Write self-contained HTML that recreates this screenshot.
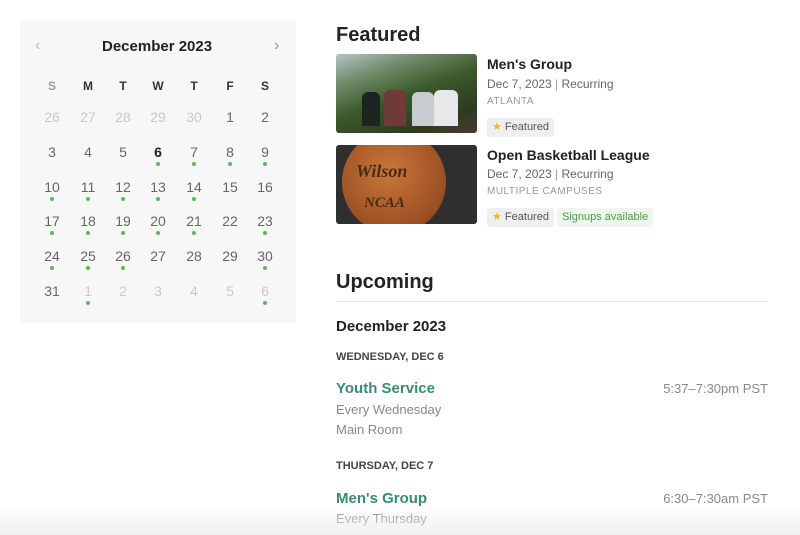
<!DOCTYPE html>
<html><head><style>
*{margin:0;padding:0;box-sizing:border-box}
body{width:800px;height:535px;overflow:hidden;background:#fff;font-family:"Liberation Sans",sans-serif;color:#222;position:relative}
.a{position:absolute;white-space:nowrap}
.cal{position:absolute;left:20px;top:20px;width:276px;height:303px;background:#f7f7f7}
.c{position:absolute;width:30px;margin-left:-15px;text-align:center;font-size:14px;color:#666}
.h{font-size:12px;font-weight:bold;color:#333}
.g{color:#c8c8c8}
.d{position:absolute;width:4px;height:4px;border-radius:2px;background:#5cb85c;margin-left:-2px}
.img{position:absolute;left:336px;width:141px;height:79px;border-radius:3px;overflow:hidden}
.t{font-size:14px;font-weight:bold;color:#222}
.s{font-size:12px;color:#666}
.cap{font-size:10px;color:#999;letter-spacing:.5px}
.b{position:absolute;height:19px;border-radius:3px;font-size:11px;line-height:19px;padding:0 5px;background:#efefef;color:#555}
.ev{font-size:15px;color:#3a8a78;font-weight:bold}
.gr{font-size:13px;color:#888}
.r{right:32px;left:auto}
.dh{font-size:11px;font-weight:bold;color:#444}
</style></head><body>
<div class="cal"></div>
<div class="a" style="left:35px;top:37px;font-size:16px;color:#bbb">‹</div>
<div class="a" style="left:274px;top:37px;font-size:16px;color:#999">›</div>
<div class="a" style="left:102px;top:38px;font-size:15px;font-weight:bold;color:#222">December 2023</div>
<div id="grid"></div>
<div class="a" style="left:336px;top:24px;font-size:20px;font-weight:bold;color:#222">Featured</div>
<div class="img" style="top:54px;background:linear-gradient(160deg,#b8c4c6 0%,#6f8a6a 25%,#3c5a2a 50%,#2e3a22 80%,#4a3a2e 100%)">
<div style="position:absolute;left:26px;top:38px;width:18px;height:34px;background:#1e2420;border-radius:6px 6px 0 0"></div>
<div style="position:absolute;left:48px;top:36px;width:22px;height:36px;background:#6e3a3a;border-radius:6px 6px 0 0"></div>
<div style="position:absolute;left:76px;top:38px;width:22px;height:34px;background:#c8ccd0;border-radius:6px 6px 0 0"></div>
<div style="position:absolute;left:98px;top:36px;width:24px;height:36px;background:#e8e8ea;border-radius:6px 6px 0 0"></div>
</div>
<div class="img" style="top:145px;background:#2f2f30">
<div style="position:absolute;left:6px;top:-15px;width:104px;height:104px;border-radius:52px;background:radial-gradient(circle at 45% 40%,#c9773a,#9a4e22 70%,#6a3418)"></div>
<div style="position:absolute;left:20px;top:16px;font:bold italic 18px 'Liberation Serif',serif;color:#4a2a18">Wilson</div>
<div style="position:absolute;left:28px;top:50px;font:bold italic 15px 'Liberation Serif',serif;color:#4a2a18">NCAA</div>
</div>
<div class="a t" style="left:487px;top:56px">Men's Group</div>
<div class="a s" style="left:487px;top:77px">Dec 7, 2023 <span style="color:#999">|</span> Recurring</div>
<div class="a cap" style="left:487px;top:96px">ATLANTA</div>
<div class="b" style="left:487px;top:118px"><span style="color:#f0b429">★</span> Featured</div>
<div class="a t" style="left:487px;top:147px">Open Basketball League</div>
<div class="a s" style="left:487px;top:167px">Dec 7, 2023 <span style="color:#999">|</span> Recurring</div>
<div class="a cap" style="left:487px;top:186px">MULTIPLE CAMPUSES</div>
<div class="b" style="left:487px;top:208px"><span style="color:#f0b429">★</span> Featured</div>
<div class="b" style="left:557px;top:208px;background:#eef7ee;color:#4a9a4a">Signups available</div>
<div class="a" style="left:336px;top:271px;font-size:20px;font-weight:bold;color:#222">Upcoming</div>
<div class="a" style="left:336px;top:301px;width:432px;height:1px;background:#ddd"></div>
<div class="a" style="left:336px;top:318px;font-size:15px;font-weight:bold;color:#222">December 2023</div>
<div class="a dh" style="left:336px;top:351px">WEDNESDAY, DEC 6</div>
<div class="a ev" style="left:336px;top:380px">Youth Service</div>
<div class="a gr r" style="top:381px">5:37–7:30pm PST</div>
<div class="a gr" style="left:336px;top:402px">Every Wednesday</div>
<div class="a gr" style="left:336px;top:422px">Main Room</div>
<div class="a dh" style="left:336px;top:460px">THURSDAY, DEC 7</div>
<div class="a ev" style="left:336px;top:490px">Men's Group</div>
<div class="a gr r" style="top:491px">6:30–7:30am PST</div>
<div class="a gr" style="left:336px;top:511px">Every Thursday</div>
<div class="a" style="left:0;top:505px;width:800px;height:30px;background:linear-gradient(rgba(240,240,240,0),rgba(238,238,238,.9))"></div>
<script>
var xs=[52,88,123,158,194,230,265],ys=[118,153,188,222,257,292];
var h="",hd=["S","M","T","W","T","F","S"];
hd.forEach(function(l,i){h+='<div class="c h" style="left:'+xs[i]+'px;top:79px;'+(i==0?'color:#999':'')+'">'+l+'</div>';});
var days=[26,27,28,29,30,1,2];for(var d=3;d<=31;d++)days.push(d);days.push(1,2,3,4,5,6);
var dots={};[6,7,8,9,10,11,12,13,14,17,18,19,20,21,23,24,25,26,30].forEach(function(v){dots["c"+v]=1});
days.forEach(function(v,i){var r=Math.floor(i/7),c=i%7;var gray=(r==0&&i<5)||(r==5&&c>0);
var st='left:'+xs[c]+'px;top:'+(ys[r]-9)+'px;';if(!gray&&v==6)st+='font-weight:bold;color:#222;';
h+='<div class="c'+(gray?' g':'')+'" style="'+st+'">'+v+'</div>';
var dot=(!gray&&dots["c"+v])||(r==5&&(c==1||c==6));
if(dot)h+='<div class="d" style="left:'+xs[c]+'px;top:'+(ys[r]+9)+'px"></div>';});
document.getElementById("grid").innerHTML=h;
</script>
</body></html>
